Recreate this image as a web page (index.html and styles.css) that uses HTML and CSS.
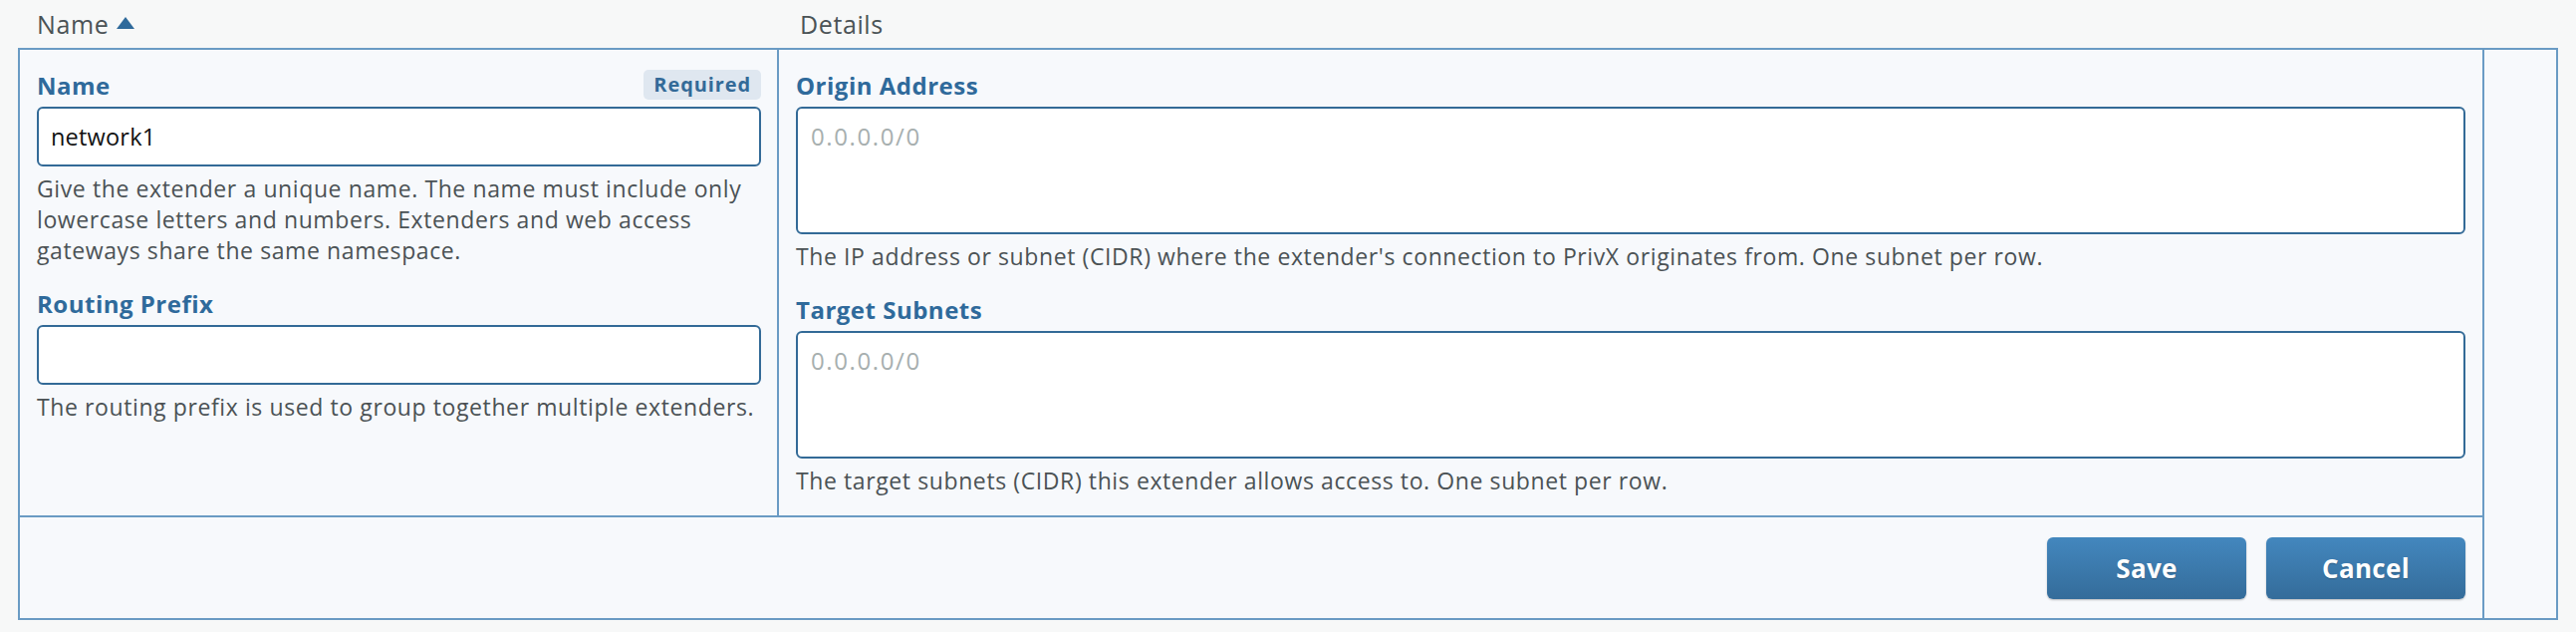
FILE: index.html
```html
<!DOCTYPE html>
<html lang="en">
<head>
<meta charset="utf-8">
<title>Extenders</title>
<link rel="stylesheet" href="styles.css">
</head>
<body>
<div class="page">
  <div class="thead">
    <div class="th th-name">Name <svg class="sort" width="18" height="12" viewBox="0 0 18 12"><polygon points="9,0 18,12 0,12" fill="#2f6a9b"/></svg></div>
    <div class="th th-details">Details</div>
    <div class="th th-extra"></div>
  </div>
  <div class="tbody">
    <div class="main">
      <div class="form">
        <div class="col col-left">
          <div class="field">
            <div class="label-row">
              <label class="label" for="name">Name</label>
              <span class="badge">Required</span>
            </div>
            <input id="name" class="input" type="text" value="network1">
            <p class="help">Give the extender a unique name. The name must include only lowercase letters and numbers. Extenders and web access gateways share the same namespace.</p>
          </div>
          <div class="field">
            <div class="label-row">
              <label class="label" for="prefix">Routing Prefix</label>
            </div>
            <input id="prefix" class="input" type="text" value="">
            <p class="help">The routing prefix is used to group together multiple extenders.</p>
          </div>
        </div>
        <div class="col col-right">
          <div class="field">
            <div class="label-row">
              <label class="label" for="origin">Origin Address</label>
            </div>
            <textarea id="origin" class="textarea" placeholder="0.0.0.0/0"></textarea>
            <p class="help">The IP address or subnet (CIDR) where the extender's connection to PrivX originates from. One subnet per row.</p>
          </div>
          <div class="field">
            <div class="label-row">
              <label class="label" for="target">Target Subnets</label>
            </div>
            <textarea id="target" class="textarea" placeholder="0.0.0.0/0"></textarea>
            <p class="help">The target subnets (CIDR) this extender allows access to. One subnet per row.</p>
          </div>
        </div>
      </div>
      <div class="footer">
        <button class="btn" type="button">Save</button>
        <button class="btn" type="button">Cancel</button>
      </div>
    </div>
    <div class="extra"></div>
  </div>
</div>
</body>
</html>
```
FILE: styles.css
```css
* { box-sizing: border-box; }
html, body { margin: 0; padding: 0; }
body {
  background: #f7f8f8;
  font-family: "Open Sans", "Noto Sans", sans-serif;
  color: #4b5255;
}
.page {
  padding: 0 18px 0 18px;
}
.thead {
  display: grid;
  grid-template-columns: 765px 1712px 1fr;
  height: 48px;
  align-items: center;
}
.th {
  font-size: 25px;
  color: #4b5356;
  display: flex;
  align-items: center;
  gap: 8px;
  letter-spacing: 0.6px;
}
.th-name { padding-left: 19px; }
.th-details { padding-left: 20px; }
.sort { margin-top: -3px; }

.tbody {
  display: grid;
  grid-template-columns: 1fr 72px;
  border: 2px solid #6a9bc4;
  background: #f7f9fc;
}
.main {
  display: flex;
  flex-direction: column;
  border-right: 2px solid #6a9bc4;
}
.form {
  display: grid;
  grid-template-columns: 762px 1fr;
}
.col {
  padding: 20px 17px 19px 17px;
  display: flex;
  flex-direction: column;
  gap: 22px;
}
.col-left {
  border-right: 2px solid #6a9bc4;
  padding-left: 17px;
  padding-right: 16px;
}
.col-right {
  padding-left: 17px;
  padding-right: 17px;
}
.field {
  display: flex;
  flex-direction: column;
}
.label-row {
  display: flex;
  justify-content: space-between;
  align-items: center;
  height: 30px;
  margin-bottom: 7px;
}
.label {
  font-size: 24px;
  font-weight: 700;
  color: #2f6a9b;
  letter-spacing: 0.5px;
}
.badge {
  background: #dfe7f0;
  color: #336a98;
  font-size: 20px;
  font-weight: 700;
  height: 30px;
  line-height: 30px;
  padding: 0 10px;
  border-radius: 5px;
  letter-spacing: 0.9px;
}
.input,
.textarea {
  display: block;
  width: 100%;
  border: 2px solid #336a97;
  border-radius: 6px;
  background: #fff;
  font-family: "Open Sans", "Noto Sans", sans-serif;
  font-size: 23.5px;
  color: #111;
  outline: none;
  margin: 0;
  letter-spacing: 0.2px;
}
.input {
  height: 60px;
  padding: 0 12px;
}
.textarea {
  height: 128px;
  padding: 13px 13px;
  line-height: 30px;
  resize: none;
  font-size: 24px;
  letter-spacing: 1.6px;
}
.textarea::placeholder {
  color: #a7afaf;
}
.help {
  margin: 7px 0 0 0;
  font-size: 23px;
  line-height: 31px;
  color: #4b5255;
  letter-spacing: 0.6px;
}
.footer {
  border-top: 2px solid #6a9bc4;
  display: flex;
  justify-content: flex-end;
  gap: 20px;
  padding: 20px 17px 19px 0;
}
.btn {
  width: 200px;
  height: 62px;
  border: none;
  border-radius: 6px;
  background: linear-gradient(to bottom, #4387be, #346c9a);
  color: #fff;
  font-family: "Open Sans", "Noto Sans", sans-serif;
  font-size: 26px;
  font-weight: 700;
  letter-spacing: 0.3px;
  text-shadow: 0 1px 1px rgba(0,0,0,0.25);
  box-shadow: 0 1px 2px rgba(0,0,0,0.25);
  cursor: pointer;
}
.extra {
  background: #f7f9fc;
}
```
